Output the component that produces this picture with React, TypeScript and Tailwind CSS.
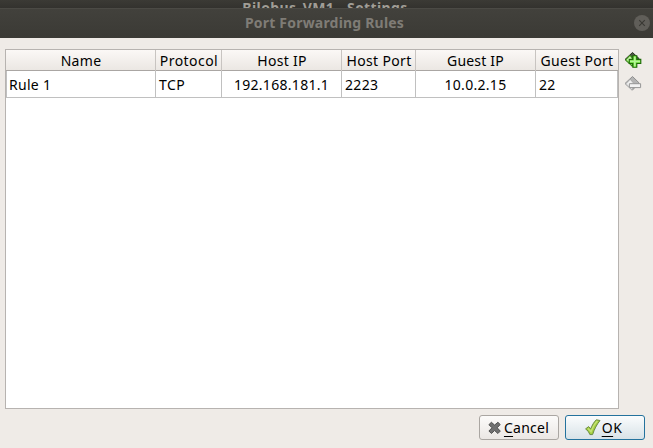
import React from "react";

type Column = {
  title: string;
  value: string;
  head: string;
  cell: string;
};

const columns: Column[] = [
  { title: "Name", value: "Rule 1", head: "ml-px tracking-[0.3px]", cell: "pl-[3px] tracking-[0.3px]" },
  { title: "Protocol", value: "TCP", head: "ml-px tracking-[0.45px]", cell: "pl-[3px] tracking-[0.4px]" },
  { title: "Host IP", value: "192.168.181.1", head: "ml-px tracking-[0.3px]", cell: "justify-center tracking-[0.3px]" },
  { title: "Host Port", value: "2223", head: "ml-px tracking-[0.35px]", cell: "pl-[3px] tracking-[0.35px]" },
  { title: "Guest IP", value: "10.0.2.15", head: "tracking-[0.2px]", cell: "justify-center tracking-[0.3px]" },
  { title: "Guest Port", value: "22", head: "tracking-[0.3px]", cell: "pl-[3px] tracking-[0.3px]" },
];

function AddIcon() {
  return (
    <svg width="18" height="18" viewBox="0 0 18 18">
      <path d="M1 8.5 8.5 1.5 15 7.5 8.5 15Z" fill="#4a5a42" stroke="#2a3026" strokeWidth="1" />
      <path d="M1.5 9 6 4.2 9 8 8 15.2Z" fill="#8fe35f" stroke="#2c7a10" strokeWidth="0.9" />
      <path d="M3 8.8 6 5.8 7.4 7.6 5.2 10.4Z" fill="#d8fbc4" />
      <path d="M8.8 4.8h4v3.6h4v4.1h-4v3.8h-4v-3.8H5.2V8.4h3.6Z" fill="#64d930" stroke="#1d6a06" strokeWidth="1.1" />
      <path d="M10.8 5.6v9.8M6 10.4h10" fill="none" stroke="#b4f596" strokeWidth="1.8" />
    </svg>
  );
}

function RemoveIcon() {
  return (
    <svg width="18" height="18" viewBox="0 0 18 18">
      <path d="M1 8.5 8.5 1.5 15.2 8 8.5 15Z" fill="#b4b4b4" stroke="#8e8e8e" strokeWidth="1" />
      <path d="M1.5 9 6.2 4.2 10.5 9 8 15.2Z" fill="#dedede" stroke="#a4a4a4" strokeWidth="0.8" />
      <path d="M3 8.8 6.2 5.6 8 7.8 5.4 10.4Z" fill="#f0f0f0" />
      <path d="M5.4 8.7h11.2v3.9H5.4Z" fill="#f2f2f2" stroke="#969696" strokeWidth="1" />
    </svg>
  );
}

function CancelIcon() {
  return (
    <svg width="14" height="14" viewBox="0 0 14 14">
      <path
        d="M3.4 1.3 6.6 4.1l3.3-2.8 2.3 2.2-3 3.3 3.1 3.3-2.4 2.4-3.3-3-3.2 3-2.5-2.5L4 6.8.9 3.7Z"
        fill="#707070"
        stroke="#505050"
        strokeLinejoin="round"
      />
    </svg>
  );
}

function OkIcon() {
  return (
    <svg width="16" height="17" viewBox="0 0 16 17">
      <path
        d="M.6 9.9 3.6 7.6l2.1 2.3C7.1 6.2 9 2.9 11.3.8l3.7.7C11.7 5.6 9.3 10.3 7.6 15.6H4.9C3.9 13.2 2.5 11.2.6 9.9Z"
        fill="#a4cf3e"
        stroke="#6a8a44"
        strokeLinejoin="round"
      />
      <path d="M3 9.4 6 12.7C7.6 8.3 9.6 4.7 12.4 1.9" fill="none" stroke="#c5e378" strokeWidth="1.3" />
    </svg>
  );
}

export default function App() {
  return (
    <div className="flex h-[448px] w-[653px] flex-col overflow-hidden bg-[#efebe7] font-['Noto_Sans',sans-serif] text-[14px] text-black">
      <div className="flex h-[8px] shrink-0 justify-center overflow-hidden bg-gradient-to-b from-[#3b3a35] to-[#33322e] text-[14px] leading-[18px] font-bold whitespace-nowrap text-[#a09d96]">
        <span className="-mt-px mr-[3px] tracking-[0.4px]">Bilobus_VM1 - Settings</span>
      </div>
      <header className="grid h-[30px] shrink-0 grid-cols-[1fr_auto_1fr] items-center border-t border-[#4b4a45] bg-gradient-to-b from-[#42413c] to-[#3b3a35]">
        <span />
        <h1 className="mr-1 -mt-[2px] text-[14px] leading-[20px] font-bold tracking-[0.2px] text-[#7f7c76]">Port Forwarding Rules</h1>
        <button className="mr-[3px] mb-px flex size-4 items-center justify-center justify-self-end rounded-full bg-[#605e59]">
          <svg width="8" height="8" viewBox="0 0 8 8">
            <path d="M1.2 1.2l5.6 5.6M6.8 1.2 1.2 6.8" stroke="#3a3934" strokeWidth="1.1" />
          </svg>
        </button>
      </header>
      <main className="flex gap-[5px] pt-[11px] pl-[5px]">
        <div className="h-[360px] w-[614px] border border-[#b7b3b0] bg-white">
          <div className="grid h-[21px] grid-cols-[150px_66px_120px_74px_120px_82px] border-b border-[#aaa6a3] bg-gradient-to-b from-[#fbf8f6] to-[#ebe7e3]">
            {columns.map((c) => (
              <div key={c.title} className="flex items-center justify-center border-r border-[#c8c4c1] whitespace-nowrap last:border-r-0">
                <span className={c.head}>{c.title}</span>
              </div>
            ))}
          </div>
          <div className="grid h-[27px] grid-cols-[149px_66px_120px_74px_120px_82px] border-b border-l border-[#c0c0c0]">
            {columns.map((c) => (
              <div key={c.title} className={"flex items-center border-r border-[#c0c0c0] whitespace-nowrap first:-ml-px " + c.cell}>
                {c.value}
              </div>
            ))}
          </div>
        </div>
        <div className="flex flex-col gap-[6px] pt-[2px]">
          <AddIcon />
          <RemoveIcon />
        </div>
      </main>
      <footer className="mt-[6px] flex justify-end gap-[6px] pr-2">
        <button className="flex h-[25px] w-[80px] items-center justify-center gap-[2px] rounded-[3px] border border-[#aaa6a2] bg-gradient-to-b from-[#fcfbfa] to-[#ebe7e4] pr-px">
          <CancelIcon />
          <span className="tracking-[0.25px]"><span className="underline decoration-1 underline-offset-[3px]">C</span>ancel</span>
        </button>
        <button className="flex h-[25px] w-[80px] items-center justify-center gap-px rounded-[3px] border border-[#24729d] bg-gradient-to-b from-[#fafcfd] to-[#d8e2e7] pr-[3px]">
          <OkIcon />
          <span className="tracking-[0.5px]"><span className="underline decoration-1 underline-offset-[3px]">O</span>K</span>
        </button>
      </footer>
    </div>
  );
}
